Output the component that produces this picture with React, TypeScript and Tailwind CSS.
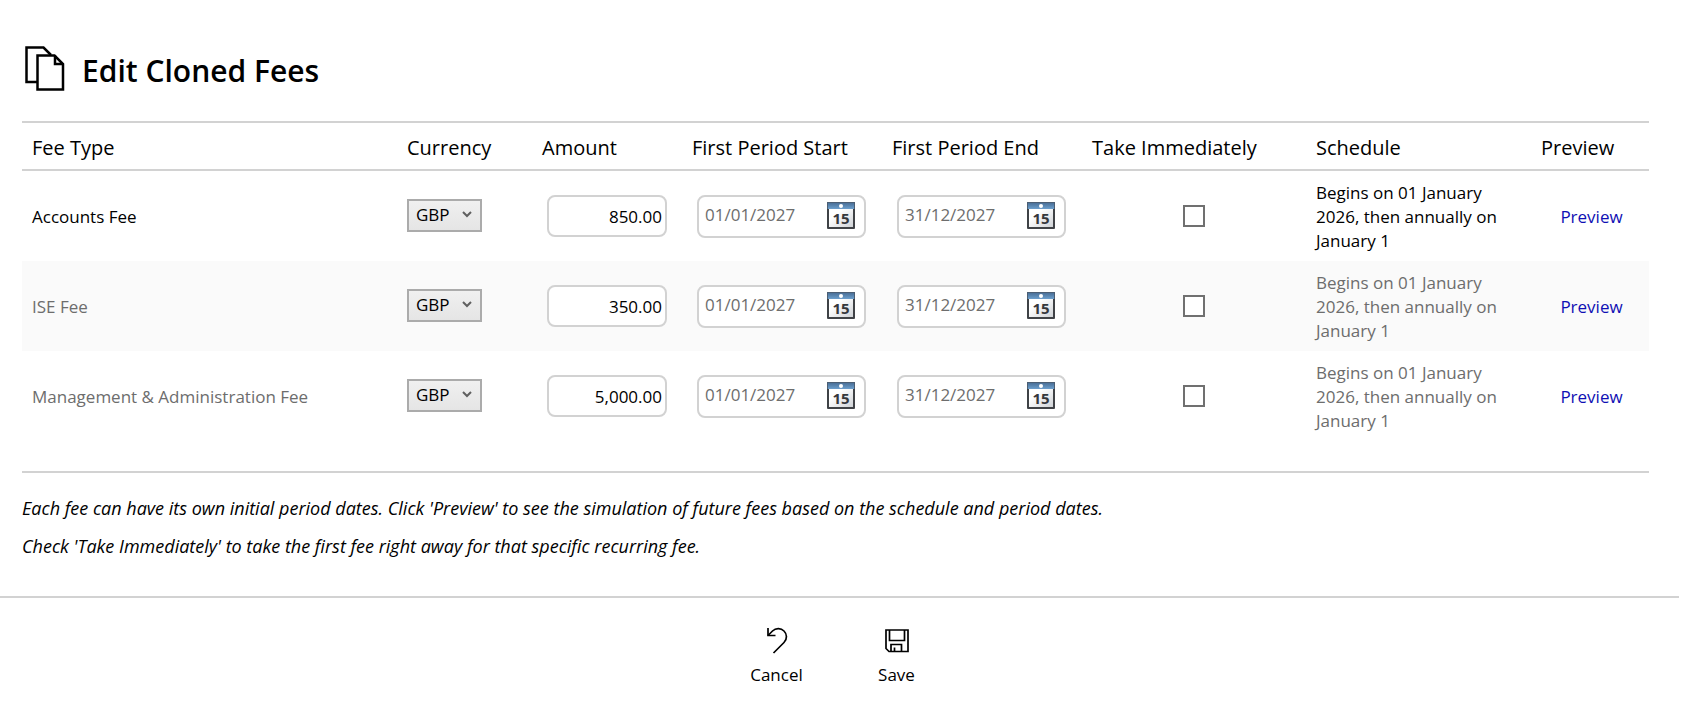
import React, { useState } from 'react';

interface Fee {
  id: string;
  name: string;
  currency: string;
  amount: string;
  start: string;
  end: string;
  takeImmediately: boolean;
  schedule: string;
  muted: boolean;
}

const schedule = 'Begins on 01 January 2026, then annually on January 1';

const initialFees: Fee[] = [
  { id: 'accounts', name: 'Accounts Fee', currency: 'GBP', amount: '850.00', start: '01/01/2027', end: '31/12/2027', takeImmediately: false, schedule, muted: false },
  { id: 'ise', name: 'ISE Fee', currency: 'GBP', amount: '350.00', start: '01/01/2027', end: '31/12/2027', takeImmediately: false, schedule, muted: true },
  { id: 'management', name: 'Management & Administration Fee', currency: 'GBP', amount: '5,000.00', start: '01/01/2027', end: '31/12/2027', takeImmediately: false, schedule, muted: true },
];

const columns = [
  { label: 'Fee Type', width: '' },
  { label: 'Currency', width: 'w-[135px]' },
  { label: 'Amount', width: 'w-[150px]' },
  { label: 'First Period Start', width: 'w-[200px]' },
  { label: 'First Period End', width: 'w-[200px]' },
  { label: 'Take Immediately', width: 'w-[224px]' },
  { label: 'Schedule', width: 'w-[225px]' },
  { label: 'Preview', width: 'w-[118px]' },
];

export default function App() {
  const [fees, setFees] = useState<Fee[]>(initialFees);

  const updateFee = (id: string, changes: Partial<Fee>) => {
    setFees(prev => prev.map(fee => (fee.id === id ? { ...fee, ...changes } : fee)));
  };

  return (
    <div className="bg-white font-['Open_Sans',sans-serif] text-[17px] leading-6 text-black">
      <main className="pt-11 pr-10 pl-[22px]">
        <header className="flex h-[77px] items-start gap-[17px]">
          <CopyIcon />
          <h1 className="pt-[7px] text-[30px] leading-10 font-semibold">Edit Cloned Fees</h1>
        </header>

        <div className="border-b-2 border-[#d2d2d2] pb-[30px]">
          <table className="w-full table-fixed border-separate border-spacing-0">
            <thead>
              <tr className="h-[50px]">
                {columns.map(column => (
                  <th
                    key={column.label}
                    scope="col"
                    className={`border-y-2 border-[#d2d2d2] px-2.5 pt-1 text-left text-[20px] leading-7 font-normal whitespace-nowrap ${column.width}`}
                  >
                    {column.label}
                  </th>
                ))}
              </tr>
            </thead>
            <tbody>
              {fees.map(fee => (
                <FeeRow key={fee.id} fee={fee} onChange={updateFee} />
              ))}
            </tbody>
          </table>
        </div>

        <div className="space-y-3.5 pt-[23px] pb-[38px] text-lg leading-6 italic">
          <p>
            Each fee can have its own initial period dates. Click 'Preview' to see the simulation of future fees based
            on the schedule and period dates.
          </p>
          <p>Check 'Take Immediately' to take the first fee right away for that specific recurring fee.</p>
        </div>
      </main>

      <footer className="mr-2.5 flex justify-center border-t-2 border-[#d2d2d2] pt-[26px] pr-1.5">
        <button type="button" className="flex w-[120px] flex-col items-center gap-[7px]">
          <UndoIcon />
          Cancel
        </button>
        <button type="button" className="flex w-[120px] flex-col items-center gap-[7px]">
          <SaveIcon />
          Save
        </button>
      </footer>
    </div>
  );
}

interface FeeRowProps {
  fee: Fee;
  onChange: (id: string, changes: Partial<Fee>) => void;
}

function FeeRow({ fee, onChange }: FeeRowProps) {
  return (
    <tr className={`h-[90px] even:bg-[#fafafa] ${fee.muted ? 'text-[#6d6d6d]' : 'text-black'}`}>
      <td className="px-2.5 pt-0.5">{fee.name}</td>
      <td className="px-2.5 pb-0.5">
        <div className="relative w-[75px]">
          <select
            aria-label={`${fee.name} currency`}
            value={fee.currency}
            onChange={e => onChange(fee.id, { currency: e.target.value })}
            className="block h-[33px] w-full appearance-none border-2 border-[#ababab] bg-linear-to-b from-[#f0f0f0] to-[#e5e5e5] pl-[7px] text-black"
          >
            <option>GBP</option>
            <option>EUR</option>
            <option>USD</option>
          </select>
          <svg className="pointer-events-none absolute top-3 right-2.5" width="10" height="7" viewBox="0 0 10 7" fill="none">
            <path d="M1 1L5 5L9 1" stroke="#606060" strokeWidth="2" />
          </svg>
        </div>
      </td>
      <td className="pl-[15px]">
        <input
          type="text"
          aria-label={`${fee.name} amount`}
          value={fee.amount}
          onChange={e => onChange(fee.id, { amount: e.target.value })}
          className="block h-[42px] w-[120px] rounded-lg border-2 border-[#d2d2d2] bg-white px-[3px] text-right text-black"
        />
      </td>
      <td className="pl-[15px]">
        <DateField label={`${fee.name} first period start`} value={fee.start} onChange={start => onChange(fee.id, { start })} />
      </td>
      <td className="pl-[15px]">
        <DateField label={`${fee.name} first period end`} value={fee.end} onChange={end => onChange(fee.id, { end })} />
      </td>
      <td>
        <input
          type="checkbox"
          aria-label={`${fee.name} take immediately`}
          checked={fee.takeImmediately}
          onChange={e => onChange(fee.id, { takeImmediately: e.target.checked })}
          className="mx-auto block size-[22px] appearance-none border-2 border-[#707070] bg-white checked:bg-[#707070]"
        />
      </td>
      <td className="px-2.5 pt-0.5">{fee.schedule}</td>
      <td className="pt-0.5 pl-[3px] text-center">
        <a href="#preview" className="text-[#0f0fb4]">Preview</a>
      </td>
    </tr>
  );
}

interface DateFieldProps {
  label: string;
  value: string;
  onChange: (value: string) => void;
}

function DateField({ label, value, onChange }: DateFieldProps) {
  return (
    <div className="flex h-[43px] w-[169px] items-start justify-between rounded-lg border-2 border-[#d2d2d2] bg-white pt-[5px] pr-[9px] pl-1.5">
      <input
        type="text"
        aria-label={label}
        value={value}
        onChange={e => onChange(e.target.value)}
        className="h-[26px] w-[110px] min-w-0 bg-transparent text-[#6d6d6d]"
      />
      <button type="button" aria-label={`Pick ${label}`}>
        <CalendarIcon />
      </button>
    </div>
  );
}

function CalendarIcon() {
  return (
    <svg width="28" height="27" viewBox="0 0 28 27">
      <defs>
        <linearGradient id="calendar-page" x1="0" y1="0" x2="1" y2="1">
          <stop offset="0.3" stopColor="#ffffff" />
          <stop offset="1" stopColor="#cfd2d6" />
        </linearGradient>
        <linearGradient id="calendar-top" x1="0" y1="0" x2="0" y2="1">
          <stop offset="0" stopColor="#4a7098" />
          <stop offset="1" stopColor="#6c9fcd" />
        </linearGradient>
      </defs>
      <path d="M0 6H28V26Q28 27 27 27H1Q0 27 0 26Z" fill="#3f4246" />
      <rect x="2" y="7" width="24" height="18" fill="url(#calendar-page)" />
      <rect width="28" height="7" fill="#4c5f74" />
      <rect x="1" y="1" width="26" height="6" fill="url(#calendar-top)" />
      <circle cx="14" cy="4" r="2" fill="#ffffff" />
      <text x="14" y="22" textAnchor="middle" fill="#35383c" className="font-['Open_Sans',sans-serif] text-[15px] font-bold">
        15
      </text>
    </svg>
  );
}

function CopyIcon() {
  return (
    <svg className="ml-[3px]" width="40" height="47" viewBox="0 0 40 47" fill="none" stroke="#000000" strokeWidth="2.500">
      <path d="M12 38H1.500V3.500H18.500L26 11" />
      <path d="M12.500 11.500H29.500L38 20V45.500H12.500Z" />
      <path d="M30 11.500V20H38" />
    </svg>
  );
}

function UndoIcon() {
  return (
    <svg width="32" height="32" viewBox="0 0 32 32" fill="none" stroke="#000000" strokeWidth="1.700">
      <path d="M7 4V11.500H14.500" />
      <path d="M7 11.500L11.500 7C15 3.500 20 4 23 7C26 10 26.500 15 23 18.500L12.500 29" />
    </svg>
  );
}

function SaveIcon() {
  return (
    <svg width="32" height="32" viewBox="0 0 32 32" fill="none" stroke="#000000" strokeWidth="1.700">
      <path d="M5 6H27V27.500H8L5 24.500Z" />
      <path d="M8.500 6V16.500H23.500V6" />
      <path d="M10 27.500V20.500H20.500V27.500" />
      <path d="M13.500 23.500V27.500" />
    </svg>
  );
}
